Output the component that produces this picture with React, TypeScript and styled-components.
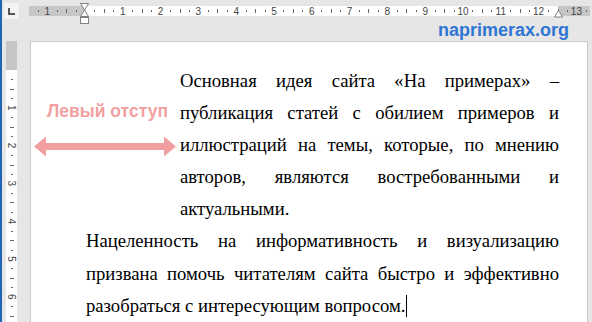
import React from "react";
import styled, { createGlobalStyle } from "styled-components";

const GlobalStyle = createGlobalStyle`
  html, body { margin: 0; padding: 0; }
  body { background: #e6e6e6; }
`;

const CM = 37.8;
const PINK = "#f29fa1";

const Frame = styled.div`
  box-sizing: border-box;
  width: 592px;
  height: 322px;
  overflow: hidden;
  background: #e6e6e6;
  border-left: 2px solid #2263b5;
  display: grid;
  grid-template-columns: 28px 1fr;
  grid-template-rows: 41px 1fr;
`;

const TopBar = styled.div`
  grid-column: 1 / 3;
  display: flex;
`;

const CornerCell = styled.div`
  width: 27px;
  flex-shrink: 0;
`;

const TabButton = styled.div`
  width: 15px;
  height: 16px;
  margin: 3px 0 0 2px;
  background: #f3f3f3;
  display: flex;
  align-items: center;
  justify-content: center;
`;

const RulerColumn = styled.div`
  flex: 1;
  display: flex;
  flex-direction: column;
`;

const HRuler = styled.div`
  position: relative;
  margin-top: 6px;
  width: 561px;
  height: 10px;
  display: flex;
`;

const Segment = styled.div<{ $margin?: boolean; $w?: number }>`
  height: 100%;
  background: ${(p) => (p.$margin ? "#c6c6c6" : "#ffffff")};
  ${(p) => (p.$w ? `width: ${p.$w}px;` : "flex: 1;")}
`;

const Ticks = styled.svg`
  position: absolute;
  left: 0;
  top: 0;
  overflow: visible;
`;

const Marker = styled.svg<{ $left: number; $top: number }>`
  position: absolute;
  left: ${(p) => p.$left}px;
  top: ${(p) => p.$top}px;
  overflow: visible;
`;

const LogoRow = styled.div`
  display: flex;
  justify-content: flex-end;
  padding-right: 23px;
  margin-top: 4px;
`;

const Logo = styled.span`
  font-family: "Liberation Sans", Arial, sans-serif;
  font-weight: bold;
  font-size: 18px;
  line-height: 20px;
  color: #2f76d4;
`;

const SideBar = styled.div`
  padding-left: 4px;
`;

const VRuler = styled.div`
  position: relative;
  width: 11px;
  height: 281px;
  display: flex;
  flex-direction: column;
`;

const VSegment = styled.div<{ $margin?: boolean; $h?: number }>`
  width: 100%;
  background: ${(p) => (p.$margin ? "#c6c6c6" : "#ffffff")};
  ${(p) => (p.$h ? `height: ${p.$h}px;` : "flex: 1;")}
`;

const Page = styled.div`
  position: relative;
  box-sizing: border-box;
  width: 558px;
  background: #ffffff;
  border: 1px solid #c8c8c8;
  border-bottom: none;
  padding: 23px 28px 0 55px;
`;

const Paragraph = styled.p<{ $indent?: number }>`
  margin: 0;
  padding-left: ${(p) => p.$indent ?? 0}px;
  font-family: "Liberation Serif", "Times New Roman", serif;
  font-size: 18.67px;
  line-height: 32.1px;
  color: #000;
  text-align: justify;
`;

const Caret = styled.span`
  display: inline-block;
  width: 1px;
  height: 22px;
  margin-left: 1px;
  background: #000;
  vertical-align: -5px;
`;

const IndentLabel = styled.div`
  position: absolute;
  left: 16px;
  top: 61px;
  font-family: "Liberation Sans", Arial, sans-serif;
  font-weight: bold;
  font-size: 17.5px;
  line-height: 1;
  color: ${PINK};
  white-space: nowrap;
`;

const IndentArrow = styled.svg`
  position: absolute;
  left: 3px;
  top: 94px;
`;

function HTicks() {
  const items: React.ReactNode[] = [];
  for (let n = -2; n <= 14; n++) {
    for (let q = 0; q < 4; q++) {
      const x = 56 + CM * n + (CM / 4) * q;
      if (x < 0 || x > 561) continue;
      const key = `${n}-${q}`;
      if (q === 0) {
        if (n !== 0)
          items.push(
            <text key={key} x={x} y={8.5} textAnchor="middle" fontSize="10" fontFamily="Liberation Sans, Arial, sans-serif" fill="#444">
              {Math.abs(n)}
            </text>
          );
      } else if (q === 2) {
        items.push(<rect key={key} x={Math.round(x)} y={3} width={1} height={4} fill="#666" />);
      } else {
        items.push(<rect key={key} x={Math.round(x)} y={4} width={1} height={2} fill="#666" />);
      }
    }
  }
  return (
    <Ticks width="561" height="10">
      {items}
    </Ticks>
  );
}

function VTicks() {
  const items: React.ReactNode[] = [];
  for (let n = 0; n <= 7; n++) {
    for (let q = 0; q < 4; q++) {
      const y = 29 + CM * n + (CM / 4) * q;
      if (y > 281) continue;
      const key = `${n}-${q}`;
      if (q === 0) {
        if (n !== 0)
          items.push(
            <text
              key={key}
              x={0}
              y={0}
              transform={`translate(5.5 ${y}) rotate(90)`}
              textAnchor="middle"
              dominantBaseline="central"
              fontSize="10"
              fontFamily="Liberation Sans, Arial, sans-serif"
              fill="#444"
            >
              {n}
            </text>
          );
      } else if (q === 2) {
        items.push(<rect key={key} x={4} y={Math.round(y)} width={4} height={1} fill="#666" />);
      } else {
        items.push(<rect key={key} x={5} y={Math.round(y)} width={2} height={1} fill="#666" />);
      }
    }
  }
  return (
    <Ticks width="11" height="281">
      {items}
    </Ticks>
  );
}

export default function App() {
  return (
    <>
      <GlobalStyle />
      <Frame>
        <TopBar>
          <CornerCell>
            <TabButton>
              <svg width="7" height="7" viewBox="0 0 7 7">
                <path d="M1 0v6h6" stroke="#555" strokeWidth="2" fill="none" />
              </svg>
            </TabButton>
          </CornerCell>
          <RulerColumn>
            <HRuler>
              <Segment $margin $w={55} />
              <Segment $w={474} />
              <Segment $margin />
              <HTicks />
              <Marker $left={51} $top={-3} width="10" height="22" viewBox="0 0 10 22">
                <path d="M0.5 0.5h8l-4 6.5z" fill="#fff" stroke="#808080" />
                <path d="M4.5 7l4 6.5h-8z" fill="#fff" stroke="#808080" />
                <rect x="0.5" y="14.5" width="8" height="6" fill="#fff" stroke="#808080" />
              </Marker>
              <Marker $left={525} $top={4} width="10" height="8" viewBox="0 0 10 8">
                <path d="M4.5 0.5l4 6.5h-8z" fill="#fff" stroke="#808080" />
              </Marker>
            </HRuler>
            <LogoRow>
              <Logo>naprimerax.org</Logo>
            </LogoRow>
          </RulerColumn>
        </TopBar>
        <SideBar>
          <VRuler>
            <VSegment $margin $h={29} />
            <VSegment />
            <VTicks />
          </VRuler>
        </SideBar>
        <Page>
          <IndentLabel>Левый отступ</IndentLabel>
          <IndentArrow width="142" height="21" viewBox="0 0 142 21">
            <path
              d="M0 10.5 L12 0.5 L12 7 L130 7 L130 0.5 L142 10.5 L130 20.5 L130 14 L12 14 L12 20.5 Z"
              fill={PINK}
              strokeLinejoin="round"
            />
          </IndentArrow>
          <Paragraph $indent={94}>
            Основная идея сайта «На примерах» – публикация статей с обилием примеров и иллюстраций на темы, которые, по
            мнению авторов, являются востребованными и актуальными.
          </Paragraph>
          <Paragraph>
            Нацеленность на информативность и визуализацию призвана помочь читателям сайта быстро и эффективно
            разобраться с интересующим вопросом.
            <Caret />
          </Paragraph>
        </Page>
      </Frame>
    </>
  );
}
